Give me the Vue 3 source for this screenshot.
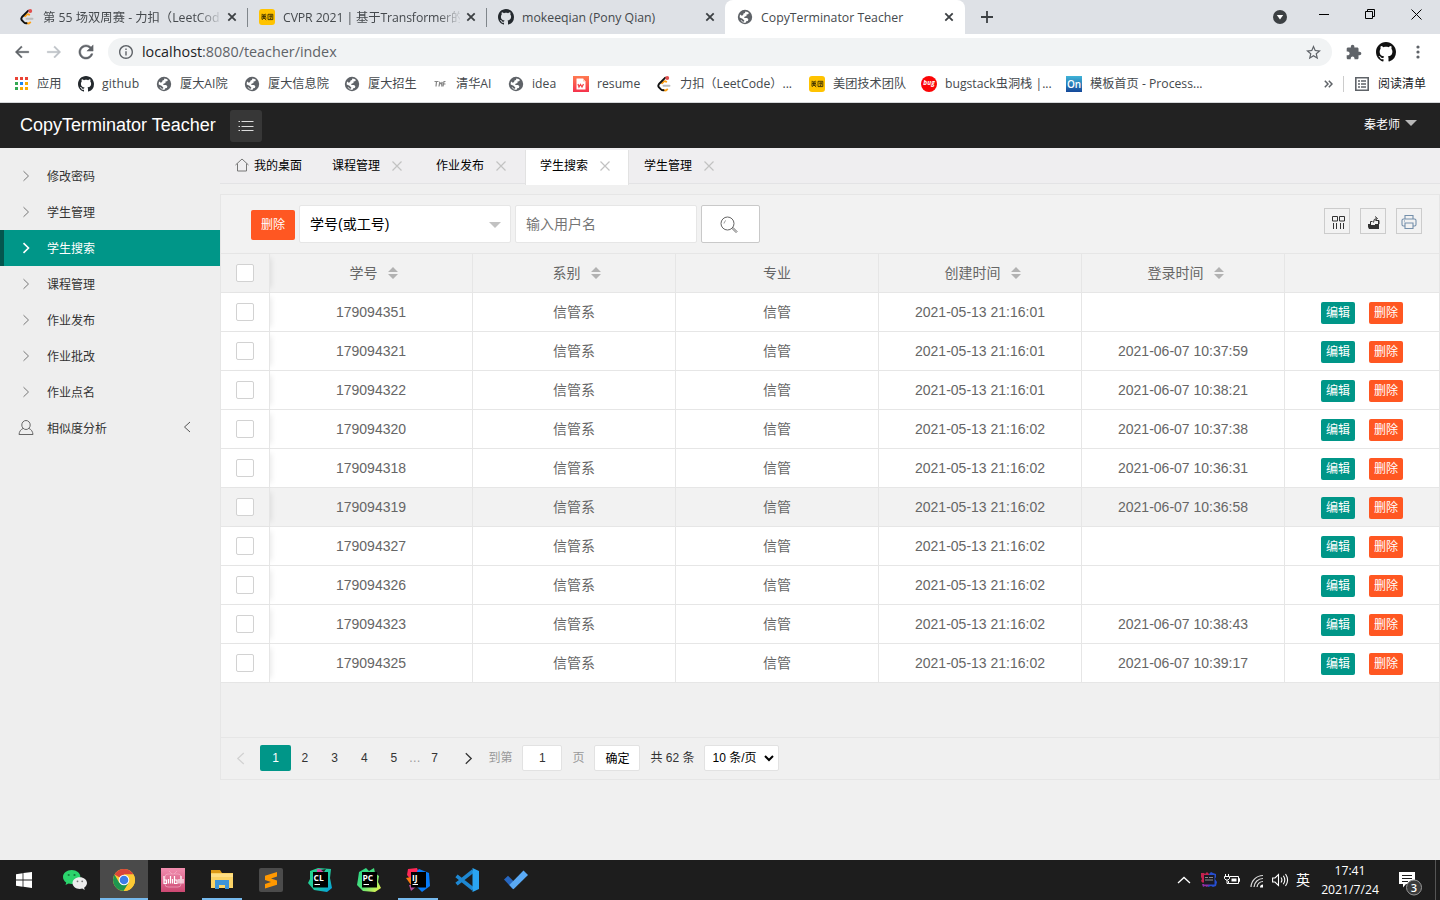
<script setup>
const browserTabs = [
  { icon: 'leet', title: '第 55 场双周赛 - 力扣（LeetCode）', cls: 't1' },
  { icon: 'meituan', title: 'CVPR 2021 | 基于Transformer的', cls: 't2' },
  { icon: 'github', title: 'mokeeqian (Pony Qian)', cls: 't3' },
  { icon: 'globe', title: 'CopyTerminator Teacher', cls: 't4 on' },
]
const bookmarks = [
  ['apps', '应用', 64], ['github', 'github', 78], ['globe', '厦大AI院', 88], ['globe', '厦大信息院', 100],
  ['globe', '厦大招生', 88], ['thu', '清华AI', 76], ['globe', 'idea', 65], ['resume', 'resume', 83],
  ['leet', '力扣（LeetCode）...', 153], ['meituan', '美团技术团队', 112], ['bug', 'bugstack虫洞栈 |...', 145],
  ['on', '模板首页 - Process...', 150],
]
const menu = ['修改密码', '学生管理', '学生搜索', '课程管理', '作业发布', '作业批改', '作业点名']
const pageTabs = ['课程管理', '作业发布', '学生搜索', '学生管理']
const heads = [['学号', 1], ['系别', 1], ['专业', 0], ['创建时间', 1], ['登录时间', 1]]
const rows = [
  ['179094351', '01', ''], ['179094321', '01', '10:37:59'], ['179094322', '01', '10:38:21'],
  ['179094320', '02', '10:37:38'], ['179094318', '02', '10:36:31'], ['179094319', '02', '10:36:58'],
  ['179094327', '02', ''], ['179094326', '02', ''], ['179094323', '02', '10:38:43'], ['179094325', '02', '10:39:17'],
]
const tasks = [
  ['win', 24], ['wechat', 26], ['chrome', 24], ['bili', 26], ['folder', 24], ['sublime', 24],
  ['cl', 24], ['pc', 24], ['ij', 24], ['vscode', 26], ['todo', 26],
]
const glyphs = { bug: 'bug', on: 'On', cl: 'CL', pc: 'PC', ij: 'IJ' }
</script>

<template>
  <div class="screen">
    <svg class="sprite" width="0" height="0">
      <defs>
        <linearGradient id="gOn" x2="0" y2="1"><stop stop-color="#3fb4d8" /><stop offset="1" stop-color="#15489a" /></linearGradient>
        <linearGradient id="gRes" x2="0" y2="1"><stop stop-color="#ff7a50" /><stop offset="1" stop-color="#f5324c" /></linearGradient>
        <linearGradient id="gBili" x2="0" y2="1"><stop stop-color="#f28fb0" /><stop offset="1" stop-color="#cc4872" /></linearGradient>
        <linearGradient id="gCl" x2="1" y2="1"><stop stop-color="#21d789" /><stop offset=".6" stop-color="#1fc6a4" /><stop offset="1" stop-color="#009ae5" /></linearGradient>
        <linearGradient id="gPc" x2="1" y2="1"><stop stop-color="#21d789" /><stop offset=".5" stop-color="#4fe07a" /><stop offset="1" stop-color="#fcf84a" /></linearGradient>
      </defs>
      <symbol id="github" viewBox="0 0 16 16"><path fill="currentColor" d="M8 0C3.58 0 0 3.58 0 8c0 3.54 2.29 6.53 5.47 7.59.4.07.55-.17.55-.38 0-.19-.01-.82-.01-1.49-2.01.37-2.53-.49-2.69-.94-.09-.23-.48-.94-.82-1.13-.28-.15-.68-.52-.01-.53.63-.01 1.08.58 1.23.82.72 1.21 1.87.87 2.33.66.07-.52.28-.87.51-1.07-1.78-.2-3.64-.89-3.64-3.95 0-.87.31-1.59.82-2.15-.08-.2-.36-1.02.08-2.12 0 0 .67-.21 2.2.82.64-.18 1.32-.27 2-.27s1.36.09 2 .27c1.53-1.04 2.2-.82 2.2-.82.44 1.1.16 1.92.08 2.12.51.56.82 1.27.82 2.15 0 3.07-1.87 3.75-3.65 3.95.29.25.54.73.54 1.48 0 1.07-.01 1.93-.01 2.2 0 .21.15.46.55.38A8.01 8.01 0 0 0 16 8c0-4.42-3.58-8-8-8z" /></symbol>
      <symbol id="globe" viewBox="0 0 16 16"><circle cx="8" cy="8" r="7.200" fill="#5f6368" /><path fill="#fff" d="M8.300 2.600q2.600.1 3.700 1.500l-1 1.200-1.500.2v1.600l-2 .7-.3 1.300h3l1.200 1.300-.6 1.500-1.500.4-1 1.700q-3.200-.2-4.800-2.800l1.500.3.3 1 1.700.3.300-1.300L5.500 9.800 2.700 8.500Q2.500 7 3.200 5.500l1.600 1.300 1.300-.8.4-1.500L8 4z" /></symbol>
      <symbol id="leet" viewBox="0 0 16 16"><g fill="none" stroke-width="1.900" stroke-linecap="round"><path stroke="#ffa116" d="M6 7.200l1.800-1.700q1.200-.8 2.400.2M7.500 14q1.900 1.400 3.700-.6" /><path stroke="#bbb" d="M7.500 9.700h6" /><path stroke="#111" d="M9.300 1.700L3 8q-1.400 1.700 0 3.300l2 2.100q1 1 2.500.9" /></g><circle cx="11.200" cy="2" r="2" fill="#e0504e" /></symbol>
      <symbol id="meituan" viewBox="0 0 16 16"><rect width="16" height="16" rx="3" fill="#ffc300" /><path d="M2.300 6h5M3.300 4.800l.7 1M6.300 4.800l-.7 1M2.600 7.500h4.400M2 9h5.500M4.800 6v3l-2 2M5 9l2.200 2M9 5.300h4.800v5.300H9zM10 7.200h3M12 6v3.500L10.500 9" stroke="#392c00" fill="none" stroke-width=".9" /></symbol>
      <symbol id="apps" viewBox="0 0 16 16"><path fill="#ea4335" d="M2 1h3v3H2zM7 1h3v3H7zM12 1h3v3h-3z" /><path fill="#34a853" d="M2 6h3v3H2zM2 11h3v3H2z" /><path fill="#1a86f0" d="M7 6h3v3H7z" /><path fill="#f9ab00" d="M12 6h3v3h-3zM12 11h3v3h-3zM7 11h3v3H7z" /></symbol>
      <symbol id="thu" viewBox="0 0 16 16"><path d="M2.500 5.500h4M4.500 5.500L4 10.500M7 10.500l.7-4 1.500 1.500 1-2-.5 4.500M11 10.500l1-5h1.500M11.500 8h2" stroke="#858585" fill="none" stroke-width="1.200" /></symbol>
      <symbol id="resume" viewBox="0 0 16 16"><rect width="16" height="16" fill="url(#gRes)" /><path d="M3.500 2.500h6.500l2.500 3V13.500h-9z" fill="#fff" /><path d="M10 2.500l2.500 3H10z" fill="#ffc9b8" /><path d="M5 8l1 3 1.500-2.500L9 11l1.500-3" stroke="#f4494c" fill="none" stroke-width="1.300" /></symbol>
      <symbol id="bug" viewBox="0 0 16 16"><circle cx="8" cy="8" r="8" fill="#fb0506" /></symbol>
      <symbol id="on" viewBox="0 0 16 16"><rect width="16" height="16" fill="url(#gOn)" /></symbol>
      <symbol id="close" viewBox="0 0 10 10"><path d="M1.300 1.300l7.400 7.400M8.700 1.300L1.300 8.700" stroke="currentColor" stroke-width="1.800" /></symbol>
      <symbol id="thinx" viewBox="0 0 10 10"><path d="M.5.5l9 9M9.500.5l-9 9" stroke="currentColor" stroke-width="1.200" /></symbol>
      <symbol id="right" viewBox="0 0 8 12"><path d="M1.500 1.200L6.500 6l-5 4.800" fill="none" stroke="currentColor" stroke-width="var(--w,1)" /></symbol>
      <symbol id="left" viewBox="0 0 8 12"><path d="M7 1L1.500 6 7 11" fill="none" stroke="currentColor" stroke-width="var(--w,1)" /></symbol>

      <symbol id="win" viewBox="0 0 24 24"><path fill="#fff" d="M4 6.200l6.600-1v6.300H4zM11.400 5.100L20 4v7.500h-8.600zM4 12.400h6.600v6.300l-6.600-1zM11.400 12.400H20V20l-8.600-1.200z" /></symbol>
      <symbol id="wechat" viewBox="0 0 26 26"><path fill="#2bd46c" d="M9.700 3C4.900 3 1 6 1 10c0 2.300 1.300 4.200 3.200 5.500L3.500 18l3-1.500c1 .3 2 .4 3.200.4 4.800 0 8.700-2.900 8.700-6.900S14.500 3 9.700 3z" /><path fill="#ececec" d="M17.800 10.300c-4.100 0-7.300 2.600-7.300 5.800 0 3.300 3.200 5.900 7.300 5.900.9 0 1.700-.1 2.500-.4l2.400 1.400-.6-2.300c1.800-1.100 2.900-2.700 2.900-4.600 0-3.200-3.200-5.800-7.200-5.800z" /><g fill="#157a3d"><circle cx="6.700" cy="8" r="1.100" /><circle cx="12.500" cy="8" r="1.100" /></g><g fill="#777"><circle cx="15.500" cy="14.300" r=".9" /><circle cx="20.200" cy="14.300" r=".9" /></g></symbol>
      <symbol id="chrome" viewBox="0 0 24 24"><circle cx="12" cy="12" r="11" fill="#fcc934" /><path fill="#d9453a" d="M12 12L2.500 6.500A11 11 0 0 1 21.500 6.500H12z" /><path fill="#1e9650" d="M2.500 6.500A11 11 0 0 0 12 23l4.800-8.200H7.200z" /><path fill="#fcc934" d="M12 6.500h9.500A11 11 0 0 1 11.500 23l5.300-8.300z" /><circle cx="12" cy="12" r="5.300" fill="#fff" /><circle cx="12" cy="12" r="4.300" fill="#3d7de8" /></symbol>
      <symbol id="bili" viewBox="0 0 26 26"><rect x="1" y="1" width="24" height="24" fill="url(#gBili)" /><rect x="5" y="7" width="16" height="13" rx="3" fill="none" stroke="#f7b6cb" stroke-opacity=".6" /><path d="M9 4l3 3M17 4l-3 3" stroke="#f7b6cb" stroke-opacity=".6" /><g fill="none" stroke="#fff" stroke-width="1.200"><path d="M4 9v7.500h2.500V13H4M8.500 12v4.500M10.500 9v7.500M12.500 12v4.500M14.500 9v7.500h2.500V13h-2.500M19 12v4.500M21 9v7.500M23 12v4.500" /></g></symbol>
      <symbol id="folder" viewBox="0 0 24 24"><path fill="#dd9a17" d="M1 2h9l2 3v4H1z" /><path fill="#fbd366" d="M1 5h22v15H1z" /><path fill="#ffdf85" d="M1 6h22v3H1z" /><path fill="#3d94d8" d="M5 12h14v9h-4v-4H9v4H5z" /></symbol>
      <symbol id="sublime" viewBox="0 0 24 24"><rect width="24" height="24" rx="2" fill="#4b4b4b" /><path fill="#ff9800" d="M18 4v4.500l-6 2 6 2v4.200L6 20.500V16l6-2.100-6-2V7.700z" /></symbol>
      <symbol id="cl" viewBox="0 0 24 24"><path fill="url(#gCl)" d="M2 3l8-3 13 1-1 9 2 10-5 4-13-2-6-7 2-4z" /><path fill="#d24ba0" d="M9 1l4 0 3 4H9z" /><path fill="#1e1e1e" d="M13 2l3 2 2-3z" /><rect x="5" y="4" width="15" height="15.500" /><path d="M6.500 16.500h5.500" stroke="#fff" /></symbol>
      <symbol id="pc" viewBox="0 0 24 24"><path fill="url(#gPc)" d="M2 4l7-4 3 3 5-3 1 5 4 3-1 6 3 6-6 4-12-1-6-6 1-6z" /><rect x="5" y="4" width="15" height="15.500" /><path d="M6.500 16.500h5.500" stroke="#fff" /></symbol>
      <symbol id="ij" viewBox="0 0 24 24"><path fill="#fe2857" d="M2 1l9-1 2 5-8 7-4-5z" /><path fill="#f97a12" d="M0 10l5-1v8z" /><path fill="#087cfa" d="M13 1l10 4 1 13-8 6-5-5V3z" /><path fill="#b74a97" d="M3 17h9l-7 6z" /><rect x="5" y="4" width="15" height="15.500" /><path d="M6.500 16.500h5.500" stroke="#fff" /></symbol>
      <symbol id="vscode" viewBox="0 0 26 26"><path fill="none" stroke="#1e88d2" stroke-width="3.600" stroke-linejoin="round" d="M2.500 8.800L19 22M2.500 17.200L19 4" /><path fill="#2aa5f2" d="M18.500 1L25 4v18l-6.500 3z" /></symbol>
      <symbol id="todo" viewBox="0 0 26 26"><path fill="#2767c0" d="M1 12.500L5 8.800l8.700 8.400-3.800 5z" /><path fill="#5aaaf5" d="M20.500 3.500L25 8 10.500 22.300 6.300 18z" /></symbol>
    </svg>

    <header class="strip">
      <div v-for="t in browserTabs" :key="t.title" class="btab" :class="t.cls">
        <svg class="fav"><use :href="'#' + t.icon" /></svg>
        <span class="bt">{{ t.title }}</span>
        <svg class="bx"><use href="#close" /></svg>
      </div>
      <svg class="plus" viewBox="0 0 12 12"><path d="M6 0v12M0 6h12" stroke="#3c4043" stroke-width="1.800" /></svg>
      <div class="winctl">
        <svg width="14" height="14" viewBox="0 0 14 14"><circle cx="7" cy="7" r="7" fill="#3c4043" /><path d="M3.800 5h6.400L7 9.500z" fill="#fff" /></svg>
        <svg class="w1" width="10" height="10"><path d="M0 4.500h10" stroke="#000" /></svg>
        <svg class="w2" width="10" height="10"><path d="M.5 2.500h7v7h-7zM2.500 2.500v-2h7v7h-2" stroke="#000" fill="none" /></svg>
        <svg class="w3" width="11" height="11"><path d="M.5.5l10 10M10.500.5l-10 10" stroke="#000" /></svg>
      </div>
    </header>

    <div class="addr">
      <svg class="a1" viewBox="0 0 24 24"><path fill="#5f6368" stroke="#5f6368" stroke-width=".5" d="M21 11H6.830l5.590-5.590L11 4l-8 8 8 8 1.410-1.410L6.830 13H21z" /></svg>
      <svg class="a2" viewBox="0 0 24 24"><path fill="#bdc1c6" stroke="#bdc1c6" stroke-width=".5" d="M3 11h14.170l-5.590-5.590L13 4l8 8-8 8-1.410-1.410L17.170 13H3z" /></svg>
      <svg class="a3" viewBox="3 3 18 18"><path fill="#5f6368" stroke="#5f6368" stroke-width=".5" d="M17.650 6.350C16.200 4.900 14.210 4 12 4c-4.420 0-7.990 3.580-7.990 8s3.570 8 7.990 8c3.730 0 6.840-2.550 7.730-6h-2.080c-.82 2.330-3.040 4-5.650 4-3.310 0-6-2.690-6-6s2.690-6 6-6c1.660 0 3.140.69 4.220 1.780L13 11h7V4l-2.350 2.350z" /></svg>
      <div class="pill">
        <svg class="info" viewBox="2 2 20 20"><path fill="#5f6368" d="M11 7h2v2h-2zm0 4h2v6h-2zm1-9C6.480 2 2 6.480 2 12s4.480 10 10 10 10-4.480 10-10S17.520 2 12 2zm0 18c-4.410 0-8-3.590-8-8s3.590-8 8-8 8 3.590 8 8-3.590 8-8 8z" /></svg>
        <span class="url"><b>localhost</b>:8080/teacher/index</span>
        <svg class="star" viewBox="2 2 20 20"><path fill="#5f6368" d="M22 9.240l-7.190-.62L12 2 9.190 8.630 2 9.240l5.460 4.730L5.820 21 12 17.270 18.180 21l-1.630-7.030L22 9.240zM12 15.400l-3.760 2.270 1-4.280-3.320-2.880 4.380-.38L12 6.100l1.710 4.040 4.380.38-3.320 2.880 1 4.280L12 15.400z" /></svg>
      </div>
      <svg class="ext" viewBox="1 0 23 23"><path fill="#5f6368" d="M20.500 11H19V7c0-1.100-.9-2-2-2h-4V3.500C13 2.120 11.880 1 10.500 1S8 2.120 8 3.500V5H4c-1.100 0-1.990.9-1.990 2v3.800H3.500c1.490 0 2.700 1.210 2.700 2.700s-1.210 2.700-2.700 2.700H2V20c0 1.100.9 2 2 2h3.800v-1.500c0-1.490 1.210-2.700 2.700-2.700 1.490 0 2.700 1.210 2.700 2.700V22H17c1.100 0 2-.9 2-2v-4h1.500c1.380 0 2.500-1.120 2.500-2.500S21.880 11 20.500 11z" /></svg>
      <svg class="me"><use href="#github" /></svg>
      <svg class="dots" width="4" height="14"><g fill="#5f6368"><circle cx="2" cy="2" r="1.600" /><circle cx="2" cy="7" r="1.600" /><circle cx="2" cy="12" r="1.600" /></g></svg>
    </div>

    <nav class="marks">
      <div v-for="(b, i) in bookmarks" :key="i" class="mark" :class="'m' + i" :style="{ width: b[2] + 'px' }">
        <div class="ico"><svg class="fav"><use :href="'#' + b[0]" /></svg><em v-if="glyphs[b[0]]" :class="'e-' + b[0]">{{ glyphs[b[0]] }}</em></div>
        <span>{{ b[1] }}</span>
      </div>
      <div class="reading">
        <svg width="9" height="8"><path d="M.8.8L4 4 .8 7.200M4.800.8L8 4 4.800 7.200" fill="none" stroke="#5f6368" stroke-width="1.500" /></svg>
        <i></i>
        <svg class="list" width="14" height="14"><path d="M.8.800h12.400v12.400H.8z" fill="none" stroke="#5f6368" stroke-width="1.600" /><path d="M3 4h2M6 4h5M3 7h2M6 7h5M3 10h2M6 10h5" stroke="#5f6368" stroke-width="1.500" /></svg>
        <span>阅读清单</span>
      </div>
    </nav>

    <div class="top">
      <div class="brand">CopyTerminator Teacher</div>
      <div class="burger"><svg width="16" height="12"><path d="M3.500 1.500H15.500M3.500 6.500H15.500M3.500 10.500H15.500M.5 1.500h1.500M.5 6.500h1.500M.5 10.500h1.500" stroke="#ddd" /></svg></div>
      <div class="user">秦老师<i></i></div>
    </div>

    <div class="body">
      <aside>
        <div v-for="(m, i) in menu" :key="m" class="item" :class="{ cur: i === 2 }">
          <svg class="chev"><use href="#right" /></svg><span>{{ m }}</span>
        </div>
        <div class="item">
          <svg class="person" width="16" height="16"><g fill="none" stroke="#666"><ellipse cx="8" cy="5" rx="4.200" ry="4.500" /><path d="M5 8.500C2.700 9.500 1.300 11.500 1 14.500h14c-.3-3-1.700-5-4-6" /></g></svg>
          <span>相似度分析</span><svg class="back"><use href="#left" /></svg>
        </div>
      </aside>

      <main>
        <div class="ptabs">
          <div class="home"><svg width="14" height="14"><path d="M.5 7L7 1l6.500 6M2.500 5.500v7.500h9V5.500" fill="none" stroke="#777" /></svg><span>我的桌面</span></div>
          <div v-for="(p, i) in pageTabs" :key="p" class="ptab" :class="{ act: i === 2 }"><span>{{ p }}</span><svg class="px"><use href="#thinx" /></svg></div>
        </div>

        <section class="panel">
          <div class="tools">
            <div class="del">删除</div>
            <div class="sel">学号(或工号)<i></i></div>
            <div class="inp">输入用户名</div>
            <div class="search"><svg width="18" height="18"><circle cx="7.500" cy="7.500" r="6.500" fill="none" stroke="#666" /><path d="M4 7.500a3.500 3.500 0 0 1 2-3" fill="none" stroke="#999" /><path d="M12 12.500l1-1 4 4-1 1z" fill="none" stroke="#666" /></svg></div>
            <div class="tbtns">
              <div><svg class="cols" width="14" height="14"><path d="M1.500 1.500h5v4.500h-5zM8.500 1.500h5v4.500h-5zM2.500 8v6M5.500 8v6M9.500 8v6M12.500 8v6" fill="none" stroke="#333" /></svg></div>
              <div><svg class="exp" width="14" height="14"><path d="M1 9h3v1h4V9h3V6h1v8H2L1 12z" fill="#333" /><path d="M3.500 9V6.500h2M9 5.500h3V9M6.500 7.500q0-4 3-4M8 1.500L10.500 3.500 8 5.500" fill="none" stroke="#333" /></svg></div>
              <div><svg width="16" height="16"><path d="M4 5V1.500h8V5M3.500 12H2.500Q1 12 1 10.500V6.500Q1 5 2.500 5h11Q15 5 15 6.500v4q0 1.500-1.500 1.500h-1M4 9h8v5.500H4zM3 7h1" fill="none" stroke="#7590ab" stroke-width="1.100" /></svg></div>
            </div>
          </div>

          <div class="tr th">
            <div class="c0"><i class="box"></i></div>
            <div v-for="h in heads" :key="h[0]" class="c">{{ h[0] }}<svg v-if="h[1]" class="sort" width="10" height="12"><path d="M0 5l5-5 5 5zM0 7l5 5 5-5z" fill="#b2b2b2" /></svg></div>
            <div class="ops"></div>
          </div>
          <div v-for="(r, i) in rows" :key="r[0]" class="tr" :class="{ hov: i === 5 }">
            <div class="c0"><i class="box"></i></div>
            <div class="c">{{ r[0] }}</div>
            <div class="c">信管系</div>
            <div class="c">信管</div>
            <div class="c">2021-05-13 21:16:{{ r[1] }}</div>
            <div class="c">{{ r[2] && '2021-06-07 ' + r[2] }}</div>
            <div class="ops"><span class="ed">编辑</span><span class="rm">删除</span></div>
          </div>

          <div class="pager">
            <svg class="prev"><use href="#left" /></svg>
            <b>1</b><span class="n">2</span><span class="n">3</span><span class="n">4</span><span class="n">5</span><span class="el">…</span><span class="n">7</span>
            <svg class="next"><use href="#right" /></svg>
            <span class="g go">到第</span><span class="pin">1</span><span class="g pg">页</span><span class="ok">确定</span>
            <span class="tot">共 62 条</span>
            <span class="lim">10 条/页<svg width="10" height="7"><path d="M1 1l4 4 4-4" fill="none" stroke="#000" stroke-width="2" /></svg></span>
          </div>
        </section>
      </main>
    </div>

    <footer>
      <div v-for="t in tasks" :key="t[0]" class="task" :class="'k-' + t[0]"><div class="ico"><svg :width="t[1]" :height="t[1]"><use :href="'#' + t[0]" /></svg><em v-if="glyphs[t[0]]" class="e-jb">{{ glyphs[t[0]] }}</em></div></div>
      <div class="tray">
        <svg width="14" height="8"><path d="M1 7l6-5.500L13 7" fill="none" stroke="#fff" stroke-width="1.300" /></svg>
        <svg class="y1" width="16" height="16"><path fill="#c3224e" d="M0 1h3l1 1 2-2 2 2v3L2 11 0 9l1-2-1-2z" /><path fill="#274ed0" d="M8 2l2-2 2 1 3 1v3l-1 2 2 3-1 4-3 1-2-1-3 1z" /><path fill="#8e2fa8" d="M1 12h8l-3 3-2-1-2 1z" /><rect x="3" y="3" width="10.500" height="9.500" fill="#1a1a24" /><path d="M4 5.500h3M8 5.500h4M4 8h8" stroke="#888" /></svg>
        <svg class="y2" width="16" height="12"><path d="M6 2.500h8.500v7H4.500V7M14.500 4.500h1v3h-1M1.500 0v2.500M4.500 0v2.500M.500 2.500h5v2L4 6H2L.5 4.500zM3 6v3.500h1.500" fill="none" stroke="#fff" /><path d="M7.500 4.500h5v3h-5z" fill="#fff" /></svg>
        <svg class="y3" width="14" height="14"><g fill="none" stroke="#ddd" stroke-width="1.200"><path d="M1 13A12 12 0 0 1 13 1.500M4 13a9 9 0 0 1 9-8.500M7 13a6 6 0 0 1 6-5.500" /></g><path d="M10 13.500q0-3 3-3v3z" fill="#fff" /></svg>
        <svg class="y4" width="17" height="14"><path d="M.600 5v4H3l3.500 3.500v-11L3 5zM9 4.500q1.800 2.500 0 5M11.300 2.700q3 4.300 0 8.600M13.500 1q4.200 6 0 12" fill="none" stroke="#fff" stroke-width="1.100" /></svg>
        <span class="ime">英</span>
        <div class="clock"><span>17:41</span><span>2021/7/24</span></div>
        <div class="note"><svg width="26" height="28"><path d="M1 3h16v12H8l-3 3.500V15H1z" fill="#fff" /><path d="M4 6.500h10M4 9.500h10M4 12.500h6" stroke="#1d1d1d" /><circle cx="16" cy="18.500" r="7.500" fill="#3b3b3b" stroke="#999" /></svg><em class="e-note">3</em></div>
        <i class="edge"></i>
      </div>
    </footer>
  </div>
</template>

<style>
html, body { margin: 0; overflow: hidden; }
</style>

<style scoped>
* { box-sizing: border-box; }
.screen { width: 1440px; height: 900px; display: flex; flex-direction: column; overflow: hidden; background: #fff; font: 12px "Liberation Sans", "Noto Sans CJK SC", sans-serif; white-space: nowrap; }
.sprite { position: absolute; }
svg { display: block; flex: none; }
.fav { width: 16px; height: 16px; color: #24292e; }
.ico, .note { position: relative; flex: none; }
em { position: absolute; color: #fff; font: 700 8px/10px "Open Sans", sans-serif; text-align: center; }
.e-bug { left: 0; top: 2px; width: 16px; font-size: 6.500px; font-style: italic; }
.e-on { left: 0; top: 2px; width: 16px; font-size: 10px; line-height: 12px; font-weight: 600; }
.e-jb { left: 6px; top: 5px; font-size: 8.500px; }
.e-note { left: 8px; top: 11px; width: 16px; font-size: 11px; line-height: 15px; font-weight: 600; }

.strip { height: 34px; background: #dee1e6; display: flex; font: 12.300px "Open Sans", "Noto Sans CJK SC", sans-serif; color: #45494d; flex: none; }
.btab { display: flex; align-items: center; height: 34px; padding-right: 10px; position: relative; }
.t1 { width: 248px; padding-left: 19px; padding-right: 11px; }
.t2 { width: 239px; padding-left: 11px; padding-right: 11px; }
.t3 { width: 238px; padding-left: 11px; }
.t4 { width: 240px; padding-left: 12px; }
.t1::after, .t2::after { content: ""; position: absolute; right: 0; top: 8px; width: 1px; height: 19px; background: #80868b; }
.bt { margin-left: 8px; width: 177px; overflow: hidden; line-height: 20px; margin-top: 1px; }
.t1 .bt, .t2 .bt { -webkit-mask-image: linear-gradient(90deg, #000 155px, transparent 180px); mask-image: linear-gradient(90deg, #000 155px, transparent 180px); }
.t2 .bt { letter-spacing: -.12px; }
.bx { width: 10px; height: 10px; margin-left: auto; color: #3c4043; }
.on { background: #fff; border-radius: 8px 8px 0 0; }
.on .bx { margin-right: 1px; }
.plus { width: 12px; height: 12px; margin: 11px 0 0 16px; }
.winctl { margin: 10px 18px 0 auto; display: flex; align-items: flex-start; }
.w1 { margin-left: 32px; }
.w2 { margin-left: 36px; margin-top: -1px; }
.w3 { margin: -1px 0 0 36px; }

.addr { height: 36px; flex: none; display: flex; align-items: center; }
.a1, .a2 { width: 18px; height: 18px; margin-left: 13px; }
.a2 { margin-left: 14px; }
.a3 { width: 16px; height: 16px; margin-left: 15px; }
.pill { width: 1224px; height: 28px; border-radius: 14px; background: #f1f3f4; margin-left: 14px; display: flex; align-items: center; }
.info { width: 14px; height: 14px; margin-left: 11px; }
.url { margin-left: 9px; font: 14.350px/22px "Open Sans", sans-serif; color: #5f6368; }
.url b { font-weight: 400; color: #202124; }
.star { width: 15px; height: 15px; margin: 0 11px 0 auto; }
.ext { width: 16px; height: 16px; margin-left: 14px; }
.me { width: 20px; height: 20px; margin-left: 14px; color: #111; }
.dots { margin-left: 20px; }

.marks { height: 33px; flex: none; display: flex; align-items: center; padding: 4px 14px 8px 13px; border-bottom: 1px solid #d5d7da; font: 12.200px "Open Sans", "Noto Sans CJK SC", sans-serif; color: #45494d; }
.mark { display: flex; align-items: center; gap: 8px; flex: none; line-height: 20px; }
.m0 { margin-right: 1px; }
.m1 { letter-spacing: .15px; }
.reading { margin-left: auto; display: flex; align-items: center; line-height: 20px; font-size: 12px; color: #202124; }
.reading i { width: 1px; height: 16px; background: #ccc; margin: 0 11px 0 10px; }
.list { margin-right: 9px; }

.top { height: 45px; flex: none; background: #222; display: flex; color: #fff; align-items: flex-start; }
.brand { font-size: 18px; line-height: 44px; margin-left: 20px; width: 210px; }
.burger { width: 32px; height: 32px; margin-top: 7px; border-radius: 3px; background: #373737; display: grid; place-items: center; padding-bottom: 1px; }
.user { margin: 0 23px 0 auto; display: flex; align-items: center; line-height: 44px; }
.user i { border: 6px solid transparent; border-top-color: #b8b8b8; border-bottom: 0; margin: -4px 0 0 5px; }

.body { flex: 1; display: flex; min-height: 0; }
aside { width: 220px; background: #eee; padding-top: 10px; flex: none; }
.item { height: 36px; display: flex; align-items: center; color: #333; line-height: 34px; }
.item span { margin-top: 2px; }
.chev { width: 8px; height: 12px; margin: -1px 17px 0 22px; color: #777; }
.person { margin: 0 13px 0 18px; }
.cur { background: #009688; color: #fff; border-left: 4px solid #04564e; }
.cur .chev { margin-left: 18px; color: #fff; --w: 1.6; }
.back { width: 8px; height: 12px; margin: -2px 0 0 76px; color: #555; }

main { width: 1220px; background: #f0f0f0; }
.ptabs { height: 36px; border-bottom: 1px solid #e3e3e5; background: #efeef0; display: flex; line-height: 33px; color: #000; }
.ptabs span { margin-top: 2px; }
.home { width: 97px; padding-left: 15px; display: flex; align-items: center; gap: 5px; }
.home svg { margin-top: -2px; }
.ptab { width: 104px; padding-left: 15px; display: flex; align-items: center; gap: 12px; }
.act { background: #fff; margin-top: 2px; height: 35px; border: 1px solid #e2e2e2; border-width: 0 1px; padding-left: 14px; line-height: 29px; padding-bottom: 4px; }
.px { width: 10px; height: 10px; color: #c2c2c2; }

.panel { margin-top: 10px; width: 1220px; height: 586px; border: 1px solid #e6e6e6; background: #f0f0f0; display: flex; flex-direction: column; }
.tools { height: 58px; flex: none; padding: 10px 17px 0 30px; display: flex; font-size: 14px; background: #f2f2f2; }
.del { width: 44px; height: 30px; margin: 5px 4px 0 0; background: #ff5722; color: #fff; border-radius: 2px; font-size: 12px; line-height: 30px; text-align: center; }
.sel { width: 212px; height: 38px; background: #fff; border: 1px solid #e6e6e6; border-radius: 2px; line-height: 37px; padding: 1px 9px 0 10px; display: flex; align-items: center; color: #000; }
.sel i { border: 6px solid transparent; border-top-color: #c2c2c2; border-bottom: 0; margin-left: auto; }
.inp { width: 182px; height: 38px; margin: 0 4px; background: #fff; border: 1px solid #e6e6e6; border-radius: 2px; line-height: 36px; padding-left: 10px; color: #757575; }
.search { width: 59px; height: 38px; border: 1px solid #c9c9c9; border-radius: 2px; background: #fff; display: grid; place-items: center; padding: 2px 3px 0 0; }
.tbtns { margin: 3px 0 0 auto; display: flex; gap: 10px; }
.tbtns div { width: 26px; height: 26px; border: 1px solid #ccc; display: grid; place-items: center; padding: 1px 0 0 0; }
.cols { margin-left: 2px; }
.exp { margin-left: 2px; }

.tr { height: 39px; flex: none; display: flex; background: #fff; border-bottom: 1px solid #e6e6e6; font-size: 14px; color: #666; line-height: 38px; }
.th { background: #f2f2f2; border-top: 1px solid #e6e6e6; height: 40px; }
.hov { background: #f2f2f2; }
.c0 { width: 49px; border-right: 1px solid #e6e6e6; padding: 10px 0 0 15px; box-shadow: 5px 0 6px -4px rgba(0, 0, 0, .1); }
.box { display: block; width: 18px; height: 18px; border: 1px solid #d2d2d2; border-radius: 2px; background: #fff; }
.c { width: 203px; border-right: 1px solid #e6e6e6; display: flex; justify-content: center; align-items: center; }
.sort { margin: 0 -5px 0 10px; }
.ops { display: flex; padding: 9px 0 0 36px; gap: 14px; }
.ops span { width: 34px; height: 22px; border-radius: 2px; color: #fff; font-size: 12px; line-height: 22px; text-align: center; }
.ed { background: #009688; }
.rm { background: #ff5722; }

.pager { margin-top: auto; height: 42px; border-top: 1px solid #e6e6e6; display: flex; align-items: flex-start; padding-top: 7px; line-height: 26px; color: #333; flex: none; }
.prev, .next { width: 9px; height: 13px; margin-top: 7px; color: #d2d2d2; --w: 1.2; }
.prev { margin-left: 15px; }
.next { color: #333; margin-left: 15px; }
.pager b { width: 31px; background: #009688; color: #fff; border-radius: 2px; text-align: center; margin: 0 -1px 0 15px; font-weight: 400; }
.n { width: 29.700px; text-align: center; }
.el { width: 11px; text-align: center; color: #999; }
.g { color: #999; }
.go { margin-left: 15px; }
.pin { width: 40px; height: 26px; background: #fff; border: 1px solid #e2e2e2; border-radius: 2px; text-align: center; margin: 0 10px; line-height: 25px; }
.ok { width: 46px; height: 26px; background: #fff; border: 1px solid #e2e2e2; border-radius: 2px; text-align: center; margin: 0 10px; color: #000; }
.tot { margin-right: -1px; }
.lim { width: 75px; height: 26px; background: #fff; border: 1px solid #e2e2e2; border-radius: 2px; margin-left: 10px; padding: 0 4px 0 8px; color: #000; display: flex; align-items: center; justify-content: space-between; line-height: 24px; }

footer { height: 40px; flex: none; background: #1d1d1d; display: flex; color: #fff; }
.task { width: 49px; display: grid; place-items: center; border-bottom: 2px solid transparent; padding-top: 2px; }
.k-win { width: 48px; }
.k-wechat { width: 52px; padding-left: 2px; }
.k-chrome { width: 48px; background: #4a4a4a; border-bottom-color: #76b9ed; }
.k-folder, .k-ij { margin: 0 4px 0 5px; width: 40px; border-bottom-color: #76b9ed; }
.tray { margin-left: auto; display: flex; align-items: center; }
.y1 { margin-left: 10px; }
.y2 { margin-left: 7px; }
.y3 { margin: 2px 0 0 10px; }
.y4 { margin-left: 8px; }
.ime { font-size: 14px; margin: -2px 0 0 7px; }
.clock { width: 62px; margin-left: 9px; font: 12.200px/19px "Open Sans", sans-serif; display: flex; flex-direction: column; align-items: center; }
.note { margin: 5px 0 0 17px; }
.edge { width: 1px; height: 40px; background: #555; margin: 0 4px 0 11px; }
</style>
